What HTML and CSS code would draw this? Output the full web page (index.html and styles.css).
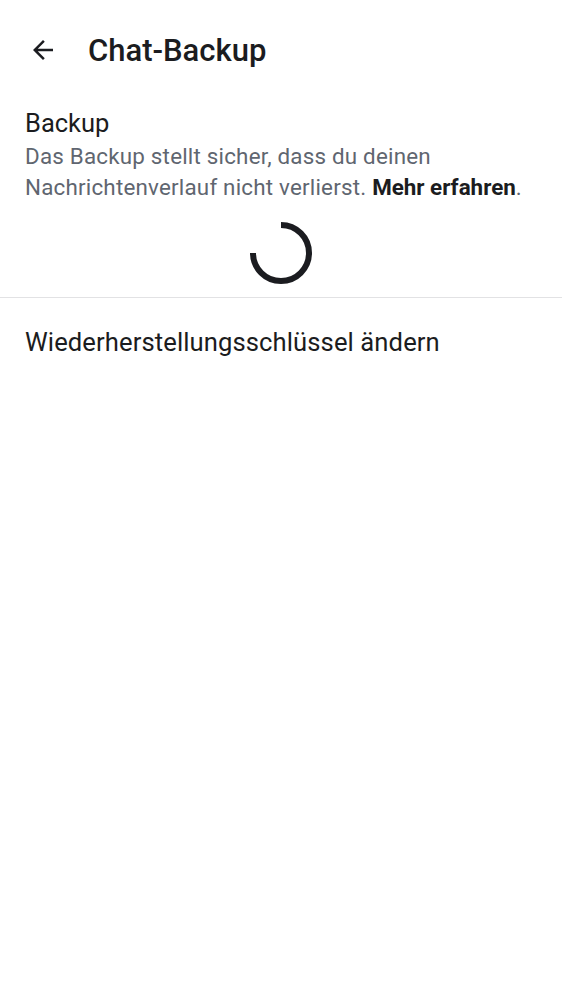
FILE: index.html
```html
<!DOCTYPE html>
<html lang="de">
<head>
<meta charset="utf-8">
<link rel="stylesheet" href="styles.css">
</head>
<body>
<header class="topbar">
  <button class="back" aria-label="Zurück">
    <svg width="30" height="30" viewBox="0 0 24 24"><path d="M20 11H7.83l5.59-5.59L12 4l-8 8 8 8 1.41-1.41L7.83 13H20v-2z" fill="#1b1c20"/></svg>
  </button>
  <h1 class="title">Chat-Backup</h1>
</header>
<section class="backup">
  <div class="item-title">Backup</div>
  <p class="desc">Das Backup stellt sicher, dass du deinen Nachrichtenverlauf nicht verlierst. <b>Mehr erfahren</b>.</p>
  <div class="spinner-wrap">
    <svg class="spinner" width="62" height="62" viewBox="0 0 62 62"><path d="M31 3 A28 28 0 1 1 3 31" fill="none" stroke="#1b1c20" stroke-width="6"/></svg>
  </div>
</section>
<div class="divider"></div>
<div class="row">Wiederherstellungsschlüssel ändern</div>
</body>
</html>
```
FILE: styles.css
```css
html, body { margin: 0; padding: 0; background: #fff; }
body { font-family: Roboto, "Noto Sans", sans-serif; color: #1b1c20; width: 562px; }
.topbar { display: flex; align-items: center; height: 100px; padding-left: 28px; }
.back { border: 0; background: none; padding: 0; width: 30px; height: 30px; display: flex; }
.title { margin: 0 0 0 30px; font-size: 31px; font-weight: 500; letter-spacing: 0; }
.backup { padding: 0 25px; }
.item-title { font-size: 25.5px; line-height: 30px; margin-top: 8px; }
.desc { margin: 3px 0 0; font-size: 22.4px; line-height: 31px; color: #5f6670; letter-spacing: 0.2px; }
.desc b { color: #1b1c20; font-weight: 700; letter-spacing: 0; }
.spinner-wrap { display: flex; justify-content: center; padding: 19px 0 13px; }
.spinner { display: block; }
.divider { height: 1px; background: #e2e2e4; }
.row { padding: 28px 25px; font-size: 25.6px; line-height: 32px; letter-spacing: 0.1px; }
```
